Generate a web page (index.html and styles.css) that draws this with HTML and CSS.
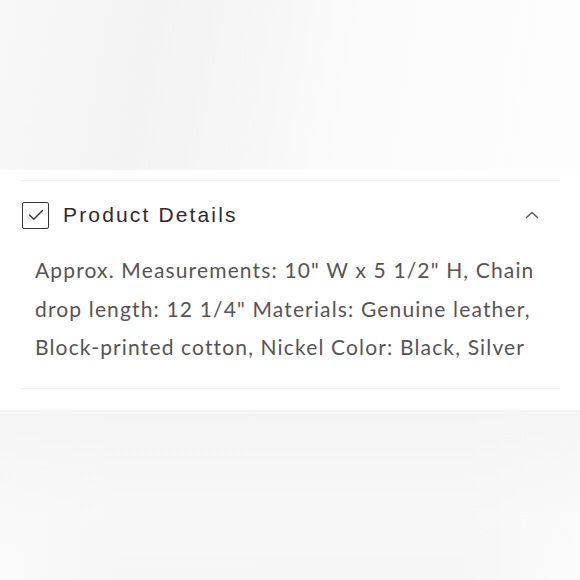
FILE: index.html
```html
<!DOCTYPE html>
<html>
<head>
<meta charset="utf-8">
<link rel="stylesheet" href="styles.css">
</head>
<body>
<div class="hero-top"></div>
<section class="details">
  <div class="accordion">
    <div class="acc-header">
      <span class="check-box">
        <svg width="16" height="12" viewBox="0 0 16 12"><path d="M1.5 6 L5.8 10.3 L14.5 1.5" fill="none" stroke="#333" stroke-width="1.3" stroke-linecap="round" stroke-linejoin="round"/></svg>
      </span>
      <span class="acc-title">Product Details</span>
      <svg class="chevron" width="14" height="8" viewBox="0 0 14 8"><path d="M1.5 6.5 L7 1.5 L12.5 6.5" fill="none" stroke="#555" stroke-width="1.4" stroke-linecap="round" stroke-linejoin="round"/></svg>
    </div>
    <div class="acc-body">
      <p>Approx. Measurements: 10" W x 5 1/2" H, Chain drop length: 12 1/4" Materials: Genuine leather, Block-printed cotton, Nickel Color: Black, Silver</p>
    </div>
  </div>
</section>
<div class="hero-bottom"></div>
</body>
</html>
```
FILE: styles.css
```css
html, body {
  margin: 0;
  padding: 0;
  background: #fff;
}
.hero-top {
  height: 170px;
  background:
    linear-gradient(100deg, #f8f8f8 0%, #f3f3f3 25%, #f5f5f5 40%, #fbfbfb 60%, #fdfdfd 100%);
}
.details {
  height: 240px;
  box-sizing: border-box;
  padding: 10px 20px 0;
  background: #fff;
}
.accordion {
  border-top: 1px solid #eeeeee;
  border-bottom: 1px solid #eeeeee;
}
.acc-header {
  height: 68px;
  display: flex;
  align-items: center;
  padding: 0 21px 2px 22px;
  margin-left: -20px;
}
.check-box {
  box-sizing: border-box;
  width: 27px;
  height: 27px;
  border: 1.5px solid #333;
  border-radius: 2px;
  display: flex;
  align-items: center;
  justify-content: center;
  flex: none;
}
.acc-title {
  margin-left: 14px;
  font-family: "Liberation Sans", Arial, sans-serif;
  font-size: 21px;
  letter-spacing: 2.15px;
  color: #2b2b2b;
  flex: 1;
}
.chevron {
  flex: none;
}
.acc-body {
  padding: 0 15px 21px;
}
.acc-body p {
  margin: 0;
  font-family: Lato, "Liberation Sans", sans-serif;
  font-size: 21px;
  line-height: 38.5px;
  letter-spacing: 1.15px;
  color: #555;
}
.hero-bottom {
  height: 170px;
  background:
    linear-gradient(180deg, rgba(244,244,244,0.9) 0%, rgba(248,248,248,0.6) 60%, rgba(248,248,248,0) 100%),
    linear-gradient(90deg, #fafafa 0%, #f6f6f6 20%, #f6f6f6 80%, #fbfbfb 100%);
}
```
